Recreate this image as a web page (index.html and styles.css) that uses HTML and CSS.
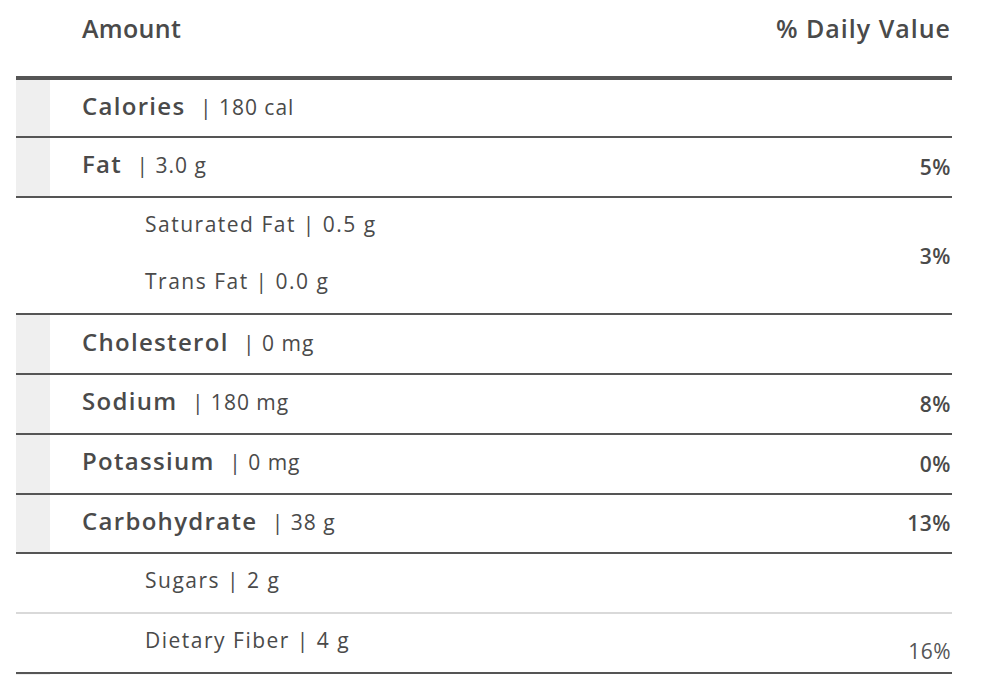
FILE: index.html
```html
<!DOCTYPE html>
<html>
<head>
<meta charset="utf-8">
<link rel="stylesheet" href="styles.css">
</head>
<body>
<div class="facts">
  <div class="head">
    <span class="head-l">Amount</span>
    <span class="head-r">% Daily Value</span>
  </div>
  <div class="rows">
    <div class="row main first">
      <div class="band"></div>
      <div class="label"><b>Calories</b> | 180 cal</div>
    </div>
    <div class="row main">
      <div class="band"></div>
      <div class="label"><b>Fat</b> | 3.0 g</div>
      <div class="pct">5%</div>
    </div>
    <div class="group">
      <div class="subs">
        <div class="sub">Saturated Fat | 0.5 g</div>
        <div class="sub">Trans Fat | 0.0 g</div>
      </div>
      <div class="pct">3%</div>
    </div>
    <div class="row main">
      <div class="band"></div>
      <div class="label"><b>Cholesterol</b> | 0 mg</div>
    </div>
    <div class="row main">
      <div class="band"></div>
      <div class="label"><b>Sodium</b> | 180 mg</div>
      <div class="pct">8%</div>
    </div>
    <div class="row main">
      <div class="band"></div>
      <div class="label"><b>Potassium</b> | 0 mg</div>
      <div class="pct">0%</div>
    </div>
    <div class="row main">
      <div class="band"></div>
      <div class="label"><b>Carbohydrate</b> | 38 g</div>
      <div class="pct">13%</div>
    </div>
    <div class="row sub-row light">
      <div class="sub">Sugars | 2 g</div>
    </div>
    <div class="row sub-row">
      <div class="sub">Dietary Fiber | 4 g</div>
      <div class="pct low">16%</div>
    </div>
    <div class="row main">
      <div class="band"></div>
    </div>
  </div>
</div>
</body>
</html>
```

FILE: styles.css
```css
html, body {
  margin: 0;
  padding: 0;
  background: #ffffff;
}
body {
  font-family: "Open Sans", "Liberation Sans", sans-serif;
  color: #4a4a4a;
}
.facts {
  width: 936px;
  margin-left: 16px;
}
.head {
  display: flex;
  justify-content: space-between;
  align-items: center;
  height: 76px;
  padding: 0 1px 20px 66px;
  box-sizing: border-box;
  font-weight: 600;
  font-size: 25px;
  letter-spacing: 0.3px;
  color: #4a4a4a;
}
.head-r {
  letter-spacing: 1px;
}
.rows {
  border-top: 4px solid #555555;
}
.row {
  display: flex;
  align-items: center;
  height: 57.78px;
  border-bottom: 2px solid #555555;
}
.row.first {
  height: 56px;
}
.row.light {
  border-bottom-color: #d9d9d9;
}
.band {
  align-self: stretch;
  width: 34px;
  background: #efefef;
}
.label {
  padding-left: 32px;
  padding-bottom: 6px;
  font-size: 21px;
  font-weight: 500;
  letter-spacing: 1px;
}
.label b {
  font-size: 24px;
  font-weight: 600;
  letter-spacing: 1.3px;
  margin-right: 8px;
}
.pct {
  margin-left: auto;
  padding-right: 1px;
  font-size: 21px;
  font-weight: 600;
  letter-spacing: 0.5px;
}
.pct.low {
  align-self: flex-end;
  padding-bottom: 7px;
  font-weight: 400;
  color: #555555;
}
.group {
  display: flex;
  align-items: center;
  border-bottom: 2px solid #555555;
}
.subs {
  display: flex;
  flex-direction: column;
}
.group .sub {
  height: 57.78px;
  display: flex;
  align-items: center;
}
.sub {
  padding-left: 129px;
  padding-bottom: 6px;
  box-sizing: border-box;
  font-size: 21px;
  font-weight: 500;
  letter-spacing: 1.5px;
}
```
